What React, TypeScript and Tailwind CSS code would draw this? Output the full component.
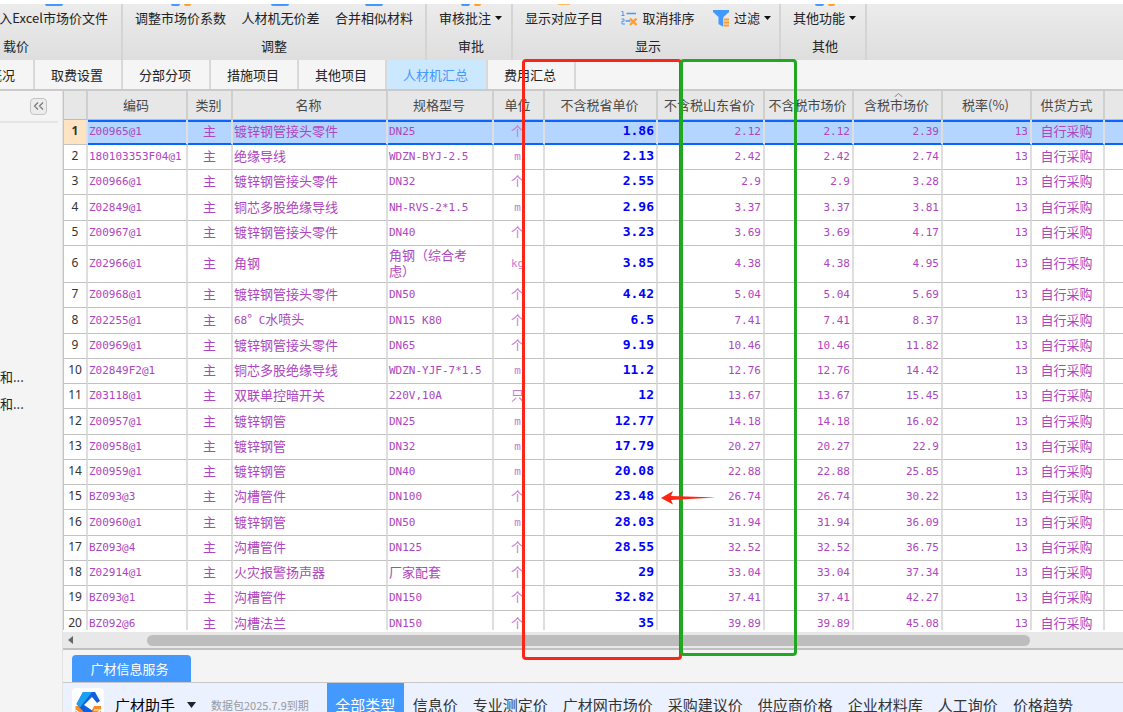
import { ReactNode } from "react";

type Row = [string, string, string, string, string, string, string, string];

// code, name, spec, unit, province price, shandong price, market price, taxed price
const rows: Row[] = [
  ["Z00965@1", "镀锌钢管接头零件", "DN25", "个", "1.86", "2.12", "2.12", "2.39"],
  ["180103353F04@1", "绝缘导线", "WDZN-BYJ-2.5", "m", "2.13", "2.42", "2.42", "2.74"],
  ["Z00966@1", "镀锌钢管接头零件", "DN32", "个", "2.55", "2.9", "2.9", "3.28"],
  ["Z02849@1", "铜芯多股绝缘导线", "NH-RVS-2*1.5", "m", "2.96", "3.37", "3.37", "3.81"],
  ["Z00967@1", "镀锌钢管接头零件", "DN40", "个", "3.23", "3.69", "3.69", "4.17"],
  ["Z02966@1", "角钢", "角钢（综合考\n虑）", "kg", "3.85", "4.38", "4.38", "4.95"],
  ["Z00968@1", "镀锌钢管接头零件", "DN50", "个", "4.42", "5.04", "5.04", "5.69"],
  ["Z02255@1", "68° C水喷头", "DN15 K80", "个", "6.5", "7.41", "7.41", "8.37"],
  ["Z00969@1", "镀锌钢管接头零件", "DN65", "个", "9.19", "10.46", "10.46", "11.82"],
  ["Z02849F2@1", "铜芯多股绝缘导线", "WDZN-YJF-7*1.5", "m", "11.2", "12.76", "12.76", "14.42"],
  ["Z03118@1", "双联单控暗开关", "220V,10A", "只", "12", "13.67", "13.67", "15.45"],
  ["Z00957@1", "镀锌钢管", "DN25", "m", "12.77", "14.18", "14.18", "16.02"],
  ["Z00958@1", "镀锌钢管", "DN32", "m", "17.79", "20.27", "20.27", "22.9"],
  ["Z00959@1", "镀锌钢管", "DN40", "m", "20.08", "22.88", "22.88", "25.85"],
  ["BZ093@3", "沟槽管件", "DN100", "个", "23.48", "26.74", "26.74", "30.22"],
  ["Z00960@1", "镀锌钢管", "DN50", "m", "28.03", "31.94", "31.94", "36.09"],
  ["BZ093@4", "沟槽管件", "DN125", "个", "28.55", "32.52", "32.52", "36.75"],
  ["Z02914@1", "火灾报警扬声器", "厂家配套", "个", "29", "33.04", "33.04", "37.34"],
  ["BZ093@1", "沟槽管件", "DN150", "个", "32.82", "37.41", "37.41", "42.27"],
  ["BZ092@6", "沟槽法兰", "DN150", "个", "35", "39.89", "39.89", "45.08"],
];

const headers = [
  "",
  "编码",
  "类别",
  "名称",
  "规格型号",
  "单位",
  "不含税省单价",
  "不含税山东省价",
  "不含税市场价",
  "含税市场价",
  "税率(%)",
  "供货方式",
  "",
];

const priceTypes = [
  "信息价",
  "专业测定价",
  "广材网市场价",
  "采购建议价",
  "供应商价格",
  "企业材料库",
  "人工询价",
  "价格趋势",
];

const MONO = "font-['DejaVu_Sans_Mono','Noto_Sans_CJK_SC',monospace] text-[11px]";

// latin runs are set smaller and monospaced, chinese keeps the cell size
function Mixed({ text }: { text: string }) {
  return (
    <>
      {text.split(/([\x20-\x7e]+)/).map((part, i) =>
        /^[\x20-\x7e]+$/.test(part) ? (
          <span key={i} className={MONO}>
            {part}
          </span>
        ) : (
          part
        )
      )}
    </>
  );
}

function Caret() {
  return (
    <svg width="7" height="4" viewBox="0 0 7 4" className="shrink-0" fill="#111">
      <path d="M0 0h7L3.5 4z" />
    </svg>
  );
}

interface RibbonButtonProps {
  label: string;
  caret?: boolean;
  icon?: ReactNode;
  stub?: ReactNode;
}

function RibbonButton({ label, caret, icon, stub }: RibbonButtonProps) {
  return (
    <button className="flex flex-col items-center whitespace-nowrap">
      <span className="flex h-1 gap-1">{stub}</span>
      <span className="flex h-5 items-center gap-1">
        {icon}
        <span>{label}</span>
        {caret && <Caret />}
      </span>
    </button>
  );
}

const blueStub = <span className="h-[2px] w-[18px] rounded-b bg-[#4499ff]" />;
const twoStub = (
  <>
    <span className="h-[2px] w-[9px] rounded-b bg-[#4499ff]" />
    <span className="h-[2px] w-[7px] rounded-b bg-[#ff9d2e]" />
  </>
);

function Group({ title, className, children }: { title: string; className: string; children: ReactNode }) {
  return (
    <div className={`flex shrink-0 flex-col border-r-2 border-[#d4d4d4] ${className}`}>
      <div className="flex justify-between">{children}</div>
      <div className="pt-2 text-center leading-5">{title}</div>
    </div>
  );
}

function SortIcon() {
  return (
    <svg width="17" height="16" viewBox="0 0 17 16" fill="none">
      <path d="M0.5 1.5H2v4M0.5 5.500h3M0.500 9h2.500v2.200H1V14h3" stroke="#4499ff" strokeWidth="1" />
      <path d="M5.5 3.5H15M4.500 11h5" stroke="#4499ff" strokeWidth="1.6" />
      <path d="M9 8.500l6.500 6.500M15.500 8.500L9 15" stroke="#ff9d2e" strokeWidth="2.4" />
    </svg>
  );
}

function FilterIcon() {
  return (
    <svg width="17" height="17" viewBox="0 0 17 17">
      <path d="M0 0h16v2l-5.5 5v10L5.500 14V7L0 2z" fill="#4499ff" />
      <path d="M10.500 8H16v9h-5.500z" fill="#e6e6e6" />
      <path d="M11 8.5h5v2h-5zM11 11.5h5v2h-5zM11 14.500h5v2h-5z" fill="#ff9d2e" />
    </svg>
  );
}

function Logo() {
  return (
    <svg width="32" height="34" viewBox="0 0 32 34">
      <rect width="32" height="34" rx="4" fill="#fff" />
      <path d="M3.500 18H9l5 6h5l3-6h7v12H3.500z" fill="#ff8b1e" />
      <path d="M3.500 22l8 6 5-4 5 4 7.500-6M22 22h7" stroke="#fff" strokeWidth="1.2" fill="none" />
      <path d="M11 4h12l5 9-3 2-5-6-8 8 9 6-3 2.500h-5L4.500 16z" fill="#0f5fe0" />
      <path d="M11 4h9L8 19.500 4.500 16z" fill="#1ba0f2" />
    </svg>
  );
}

function Tab({ label, active }: { label: string; active?: boolean }) {
  return (
    <button
      className={
        active
          ? "w-[101px] border-r-2 border-[#d8d8d8] bg-[#cce8ff] pr-[2px] text-[#4499ff]"
          : "w-[88px] border-r-2 border-[#d8d8d8] pr-[2px]"
      }
    >
      {label}
    </button>
  );
}

function PriceTable() {
  return (
    <table className="w-full table-fixed border-separate border-spacing-0 text-[13px] leading-4 text-[#ae45c0]">
      <colgroup>
        <col className="w-[24px]" />
        <col className="w-[100px]" />
        <col className="w-[45px]" />
        <col className="w-[155px]" />
        <col className="w-[106px]" />
        <col className="w-[51px]" />
        <col className="w-[113px]" />
        <col className="w-[107px]" />
        <col className="w-[89px]" />
        <col className="w-[89px]" />
        <col className="w-[89px]" />
        <col className="w-[73px]" />
        <col />
      </colgroup>
      <thead>
        <tr className="h-[29px] text-[#484848]">
          {headers.map((h, i) => (
            <th
              key={i}
              className="relative whitespace-nowrap border-b border-r-2 border-b-[#bdbdbd] border-r-[#cfcfcf] bg-[#e7e7e7] p-0 pr-[2px] font-normal last:border-r-0"
            >
              {h}
              {h === "含税市场价" && (
                <svg width="9" height="4" viewBox="0 0 9 4" className="absolute left-10 top-[2px]" fill="none">
                  <path d="M0.5 4l4-3.5 4 3.5" stroke="#888" />
                </svg>
              )}
            </th>
          ))}
        </tr>
      </thead>
      <tbody>
        {rows.map(([code, name, spec, unit, province, shandong, market, taxed], i) => {
          const selected = i === 0;
          const line =
            "whitespace-pre border-b border-r-2 border-r-[#dedede] p-0 pb-[2px] last:border-r-0 ";
          const cell = selected
            ? line +
              "border-b-[#0a64ff] bg-[#b3d5ff] border-r-[#c4cbd6] shadow-[inset_0_2px_0_#0a64ff,inset_0_-1px_0_#0a64ff] "
            : line + "border-b-[#c2c2c2] bg-white ";
          return (
            <tr key={i} className={spec.includes("\n") ? "h-[37px]" : "h-[25px] nth-[4n]:h-[26px]"}>
              <td
                className={
                  line +
                  "border-b-[#c2c2c2] text-center font-['Noto_Sans',sans-serif] text-xs leading-4 text-[#333] " +
                  (selected ? "border-r-[#0a64ff] bg-[#ffe4c4] font-bold" : "bg-white")
                }
              >
                {i + 1}
              </td>
              <td className={cell + "pl-px"}>
                <Mixed text={code} />
              </td>
              <td className={cell + "text-center"}>主</td>
              <td className={cell + "pl-px"}>
                <Mixed text={name} />
              </td>
              <td className={cell + "pl-px"}>
                <Mixed text={spec} />
              </td>
              <td className={cell + "pr-[2px] text-center text-[#c77ad4]"}>
                <Mixed text={unit} />
              </td>
              <td className={cell + "pr-[2px] text-right font-['DejaVu_Sans_Mono',monospace] font-bold text-[#0000ff]"}>
                {province}
              </td>
              {[shandong, market, taxed, "13"].map((v, k) => (
                <td key={k} className={cell + "pr-[2px] text-right"}>
                  <Mixed text={v} />
                </td>
              ))}
              <td className={cell + "pr-[2px] text-center"}>自行采购</td>
              <td className={cell} />
            </tr>
          );
        })}
      </tbody>
    </table>
  );
}

export default function App() {
  return (
    <div className="relative flex h-screen flex-col overflow-hidden bg-[#f4f4f4] font-['Noto_Sans_CJK_SC',sans-serif] text-[13px] text-[#222]">
      <div className="h-1 shrink-0 bg-white" />
      <header className="flex h-14 shrink-0 bg-linear-to-b from-[#ececec] to-[#dedede]">
        <div className="flex w-[123px] shrink-0 flex-col overflow-hidden border-r-2 border-[#d4d4d4]">
          <div className="flex justify-end pr-[13px]">
            <RibbonButton label="入Excel市场价文件" stub={blueStub} />
          </div>
          <div className="pl-[3px] pt-2 leading-5">载价</div>
        </div>
        <Group title="调整" className="w-[304px] px-3">
          <RibbonButton label="调整市场价系数" stub={twoStub} />
          <RibbonButton label="人材机无价差" stub={blueStub} />
          <RibbonButton label="合并相似材料" stub={blueStub} />
        </Group>
        <Group title="审批" className="w-[86px] pl-3 pr-2">
          <RibbonButton label="审核批注" caret stub={twoStub} />
        </Group>
        <Group title="显示" className="w-[268px] pl-3 pr-2">
          <RibbonButton label="显示对应子目" stub={<span className="h-px w-3 bg-[#ffb866]" />} />
          <RibbonButton label="取消排序" icon={<SortIcon />} />
          <RibbonButton label="过滤" icon={<FilterIcon />} caret />
        </Group>
        <Group title="其他" className="w-[86px] pl-3 pr-2">
          <RibbonButton label="其他功能" caret stub={twoStub} />
        </Group>
      </header>

      <nav className="flex h-[31px] shrink-0 border-b-2 border-[#cacaca] bg-[#f5f5f5]">
        <button className="flex w-[35px] items-center justify-end overflow-hidden whitespace-nowrap border-r-2 border-[#d8d8d8] pr-[18px]">
          概况
        </button>
        <Tab label="取费设置" />
        <Tab label="分部分项" />
        <Tab label="措施项目" />
        <Tab label="其他项目" />
        <Tab label="人材机汇总" active />
        <Tab label="费用汇总" />
      </nav>

      <div className="flex min-h-0 flex-1">
        <aside className="w-[63px] shrink-0 border-r border-[#e2e2e2]">
          <div className="mr-1 flex h-8 items-center justify-end border-b-2 border-[#e4e4e4] pr-[11px]">
            <button
              aria-label="collapse"
              className="flex size-[17px] items-center justify-center rounded-sm border border-[#c4c4c4] bg-[#ececec]"
            >
              <svg width="11" height="8" viewBox="0 0 11 8" fill="none" stroke="#777" strokeWidth="1.2">
                <path d="M5 0.5L1.5 4 5 7.5M10 0.5L6.5 4 10 7.5" />
              </svg>
            </button>
          </div>
          <ul className="pt-60 leading-[27px]">
            <li>和...</li>
            <li>和...</li>
          </ul>
        </aside>

        <main className="flex min-w-0 flex-1 flex-col">
          <div className="min-h-0 flex-1 overflow-hidden border-l border-[#c4c4c4] bg-white">
            <PriceTable />
          </div>

          <div className="flex h-5 shrink-0 items-center border-b-2 border-t-2 border-b-[#c0c0c0] border-t-white bg-[#e8e8e8] pl-[5px]">
            <svg width="5" height="8" viewBox="0 0 5 8" fill="#666">
              <path d="M5 0v8L0 4z" />
            </svg>
            <div className="ml-[74px] mr-[93px] h-[11px] flex-1 rounded-full bg-[#bdbdbd]" />
          </div>

          <div className="flex shrink-0 border-b border-[#c8c8c8] pl-[9px] pt-[5px]">
            <button className="h-[27px] w-[119px] rounded-t-sm bg-[#4499ff] pr-1 text-white">广材信息服务</button>
          </div>

          <div className="flex h-[29px] shrink-0">
            <div className="flex h-11 w-full items-center bg-[#ebf1ff] pl-[9px] text-[15px] text-[#333]">
              <Logo />
              <button className="ml-[11px] flex items-center gap-3 text-black">
                广材助手
                <svg width="9" height="6" viewBox="0 0 9 6" fill="#222">
                  <path d="M0 0h9L4.5 6z" />
                </svg>
              </button>
              <span className="ml-[15px] text-[11px] text-[#999]">数据包2025.7.9到期</span>
              <button className="ml-[18px] h-full w-[77px] bg-[#4499ff] text-white">全部类型</button>
              <div className="ml-[9px] flex gap-[15px] whitespace-nowrap">
                {priceTypes.map((t) => (
                  <button key={t}>{t}</button>
                ))}
              </div>
            </div>
          </div>
        </main>
      </div>

      {/* markup drawn over the sheet */}
      <div className="pointer-events-none absolute left-[522px] top-[59px] h-[601px] w-[160px] rounded border-3 border-[#fb2618]" />
      <div className="pointer-events-none absolute left-[680px] top-[59px] h-[597px] w-[117px] rounded border-3 border-[#22a722]" />
      <svg
        className="pointer-events-none absolute left-[661px] top-[491px]"
        width="56"
        height="14"
        viewBox="0 0 56 14"
        fill="#ff2414"
      >
        <path d="M0 7L12 0 10 5 55 6.5 10 9 12 13.5z" />
      </svg>
    </div>
  );
}
